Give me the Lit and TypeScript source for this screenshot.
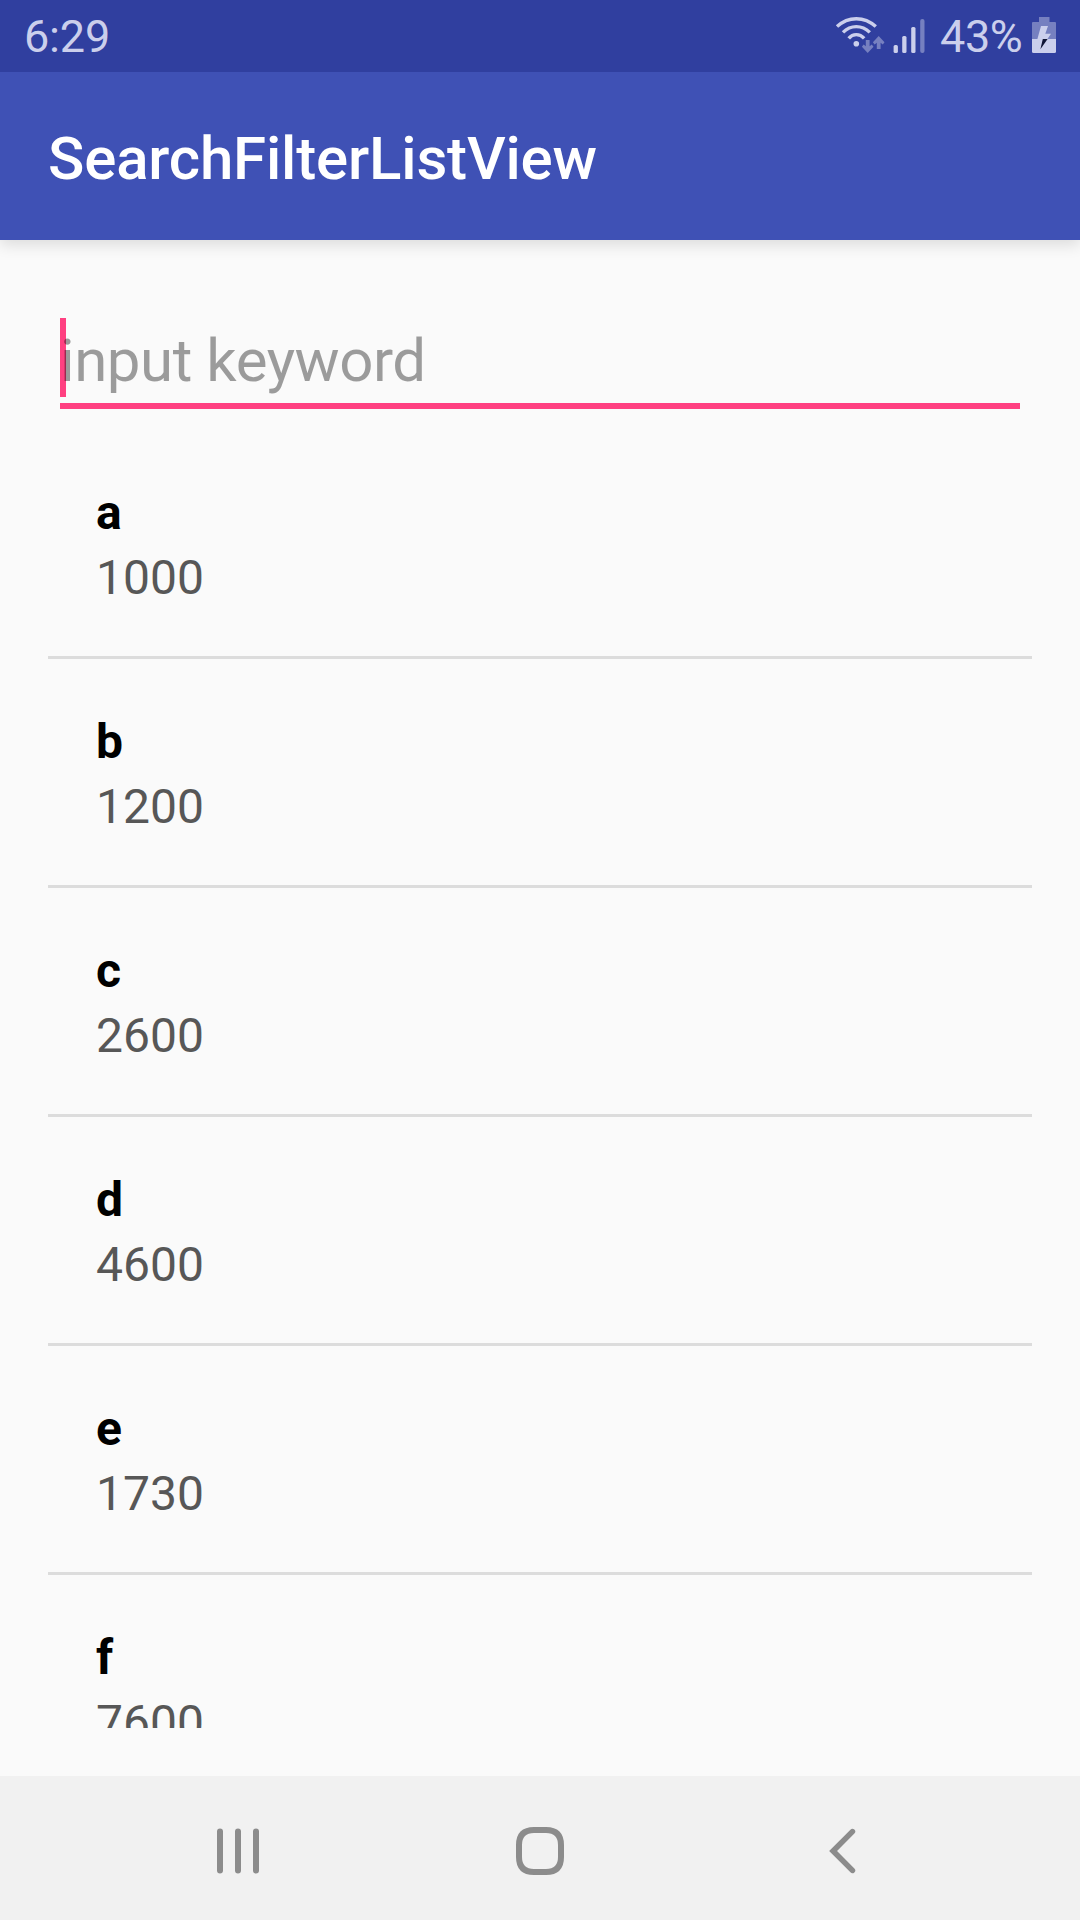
import { LitElement, html, css } from "lit";
import { customElement, property, state } from "lit/decorators.js";

interface Entry {
  name: string;
  value: string;
}

@customElement("status-bar")
class StatusBar extends LitElement {
  static styles = css`
    :host {
      display: flex;
      align-items: center;
      justify-content: space-between;
      box-sizing: border-box;
      height: 72px;
      flex: none;
      padding: 0 24px 0 24px;
      background: #303f9f;
      color: #cbcfec;
      font-size: 45px;
      line-height: 60px;
    }
    .right {
      display: flex;
      align-items: center;
      height: 72px;
    }
    .time {
      padding-top: 2px;
      letter-spacing: -0.2px;
    }
    .network {
      width: 106px;
      height: 72px;
    }
    .percent {
      width: 92px;
      padding-top: 2px;
      letter-spacing: -0.4px;
    }
    .battery {
      width: 24px;
      height: 72px;
    }
    svg {
      display: block;
    }
  `;

  render() {
    return html`
      <span class="time">6:29</span>
      <div class="right">
        <svg class="network" viewBox="834 0 106 72" fill="none">
          <g stroke="#cbcfec" stroke-width="3.4">
            <path d="M837 26.6Q845.500 18.700 856.300 18.700T875.800 26.600" />
            <path d="M843 32.4Q848.800 26.600 856.300 26.600T869.800 32.400" />
            <path d="M848.700 38.400Q851.800 34.600 856.300 34.600T864.200 38.400" />
          </g>
          <circle cx="856.300" cy="43.700" r="2.800" fill="#cbcfec" />
          <g fill="#7680c0">
            <path d="M865.800 40h3.800v6.200l2.200-1.800 1.700 2.400-5.800 6.200-5.800-6.200 1.700-2.400 2.200 1.800z" />
            <path d="M876.800 49h3.800v-6.200l2.200 1.800 1.700-2.400-5.800-6.200-5.800 6.200 1.700 2.400 2.200-1.800z" />
            <rect x="920.200" y="19" width="4.300" height="34" rx="2" />
          </g>
          <g fill="#cbcfec">
            <rect x="893.600" y="45" width="4.300" height="8" rx="1.500" />
            <rect x="902.200" y="36" width="4.300" height="17" rx="1.500" />
            <rect x="911.200" y="27" width="4.300" height="26" rx="1.500" />
          </g>
        </svg>
        <span class="percent">43%</span>
        <svg class="battery" viewBox="1032 0 24 72">
          <path d="M1039 17h10.500v5h5.500q1 0 1 1v16h-24v-16q0-1 1-1h6z" fill="#7680c0" />
          <path d="M1032 39h24v12.500q0 1.500-1.500 1.500h-21q-1.500 0-1.500-1.500z" fill="#cbcfec" />
          <path d="M1041 26h7l-2.700 7.700h5.700l-3.600 5.300h-10z" fill="#cbcfec" />
          <path d="M1042.800 39h4.800l-7.200 10.300z" fill="#101535" />
        </svg>
      </div>
    `;
  }
}

@customElement("list-entry")
class ListEntry extends LitElement {
  static styles = css`
    :host {
      display: block;
      box-sizing: border-box;
      flex: none;
      height: 229px;
      padding: 50px 48px 0;
      border-bottom: 3px solid #dcdcdc;
      font-size: 48px;
      line-height: 65px;
    }
    .name {
      color: #000;
      font-weight: 700;
    }
    .value {
      color: #575757;
    }
  `;

  @property({ attribute: false }) entry!: Entry;

  render() {
    return html`
      <div class="name">${this.entry.name}</div>
      <div class="value">${this.entry.value}</div>
    `;
  }
}

@customElement("nav-bar")
class NavBar extends LitElement {
  static styles = css`
    :host {
      display: grid;
      grid-template-columns: 302px 302px 302px;
      justify-content: center;
      align-items: center;
      justify-items: center;
      flex: none;
      height: 144px;
      padding-top: 6px;
      box-sizing: border-box;
      background: #f1f1f1;
    }
    svg {
      display: block;
      fill: none;
      stroke: #8c8c8c;
      stroke-width: 6;
    }
  `;

  render() {
    return html`
      <svg width="48" height="48" stroke-linecap="round">
        <path d="M6 4.500v39M24 4.500v39M42 4.500v39" />
      </svg>
      <svg width="48" height="48">
        <path d="M24 3H30C41 3 45 9 45 18V30C45 39 41 45 30 45H18C7 45 3 39 3 30V18C3 9 7 3 18 3Z" />
      </svg>
      <svg width="48" height="48" stroke-linecap="round">
        <path d="M34.400 4.600L15.100 24L34.400 43.400" stroke-width="5.600" />
      </svg>
    `;
  }
}

@customElement("app-root")
class AppRoot extends LitElement {
  static styles = css`
    :host {
      display: flex;
      flex-direction: column;
      width: 1080px;
      height: 1920px;
      overflow: hidden;
      background: #fafafa;
      font-family: Roboto, "Liberation Sans", sans-serif;
    }
    .app-bar {
      display: flex;
      align-items: center;
      flex: none;
      height: 168px;
      padding: 4px 48px 0;
      box-sizing: border-box;
      background: #3f51b5;
      color: #fff;
      font-size: 60px;
      font-weight: 500;
      letter-spacing: -0.17px;
      box-shadow: 0 5px 14px rgba(0, 0, 0, 0.12);
      clip-path: inset(0 0 -24px 0);
    }
    .content {
      display: flex;
      flex-direction: column;
      flex: 1;
      min-height: 0;
      padding: 78px 48px 48px;
    }
    .field {
      position: relative;
      flex: none;
      height: 91px;
      margin: 0 12px;
      padding-top: 3px;
      box-sizing: border-box;
      border-bottom: 6px solid #ff4081;
      color: rgba(0, 0, 0, 0.38);
      font-size: 60px;
      line-height: 79px;
      letter-spacing: -0.45px;
    }
    .caret {
      position: absolute;
      left: 0;
      top: 0;
      width: 6px;
      height: 79px;
      background: #ff4081;
    }
    .hint {
      position: relative;
    }
    .list {
      display: flex;
      flex-direction: column;
      flex: 1;
      min-height: 0;
      margin-top: 21px;
      overflow: hidden;
    }
  `;

  @state() private entries: Entry[] = [
    { name: "a", value: "1000" },
    { name: "b", value: "1200" },
    { name: "c", value: "2600" },
    { name: "d", value: "4600" },
    { name: "e", value: "1730" },
    { name: "f", value: "7600" },
  ];

  render() {
    return html`
      <status-bar></status-bar>
      <header class="app-bar">SearchFilterListView</header>
      <main class="content">
        <div class="field">
          <span class="caret"></span>
          <span class="hint">input keyword</span>
        </div>
        <div class="list">
          ${this.entries.map((e) => html`<list-entry .entry=${e}></list-entry>`)}
        </div>
      </main>
      <nav-bar></nav-bar>
    `;
  }
}
